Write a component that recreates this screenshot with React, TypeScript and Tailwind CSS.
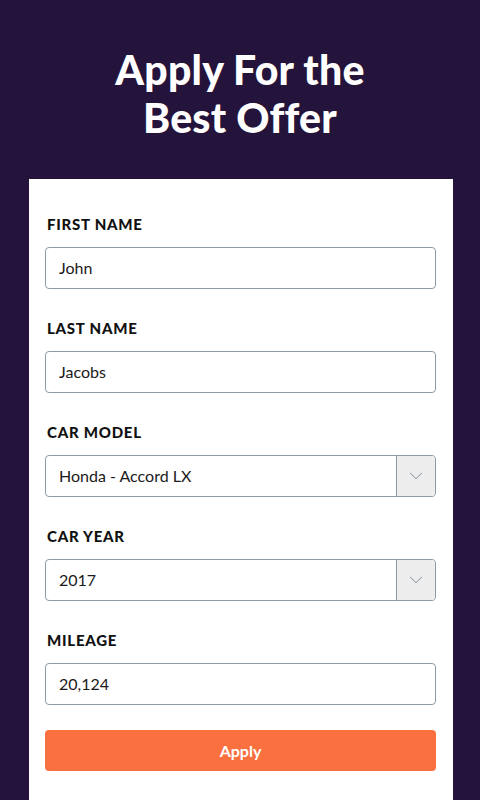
import { ChevronDown } from "lucide-react";

const FONT = "font-['Lato','Open_Sans',sans-serif]";

function Label({ children }: { children: string }) {
  return (
    <div className="pl-[2px] text-[15px] leading-5 font-black tracking-[0.05em] text-[#111111] mb-[13px]">
      {children}
    </div>
  );
}

function TextField({ value }: { value: string }) {
  return (
    <div className="h-[42px] rounded-[4px] border border-[#8e9ba6] flex items-center px-[13px] text-[16px] text-[#1a1a1a]">
      {value}
    </div>
  );
}

function SelectField({ value }: { value: string }) {
  return (
    <div className="h-[42px] rounded-[4px] border border-[#8e9ba6] flex items-stretch overflow-hidden">
      <div className="flex-1 flex items-center px-[13px] text-[16px] text-[#1a1a1a]">{value}</div>
      <div className="w-[39px] bg-[#ededed] border-l border-[#8e9ba6] flex items-center justify-center">
        <ChevronDown className="w-[22px] h-[22px] text-[#8e9ba6]" strokeWidth={1.1} />
      </div>
    </div>
  );
}

export default function App() {
  const fields = [
    { label: "FIRST NAME", value: "John", select: false },
    { label: "LAST NAME", value: "Jacobs", select: false },
    { label: "CAR MODEL", value: "Honda - Accord LX", select: true },
    { label: "CAR YEAR", value: "2017", select: true },
    { label: "MILEAGE", value: "20,124", select: false },
  ];

  return (
    <div className={`min-h-[800px] bg-[#24133b] ${FONT} flex flex-col`}>
      {/* Heading */}
      <h1 className="mt-[46px] text-center text-white text-[41px] leading-[48px] font-black tracking-[0.005em]">
        Apply For the
        <br />
        Best Offer
      </h1>

      {/* Form card */}
      <div className="mt-[37px] ml-[29px] w-[424px] flex-1 bg-white pl-4 pr-[17px] pt-[35px] pb-8">
        <div className="flex flex-col gap-[29px]">
          {fields.map((f) => (
            <div key={f.label}>
              <Label>{f.label}</Label>
              {f.select ? <SelectField value={f.value} /> : <TextField value={f.value} />}
            </div>
          ))}
        </div>
        <button className="mt-[25px] w-full h-[41px] rounded-[4px] bg-[#fb703f] text-white text-[16px] font-bold">
          Apply
        </button>
      </div>
    </div>
  );
}
